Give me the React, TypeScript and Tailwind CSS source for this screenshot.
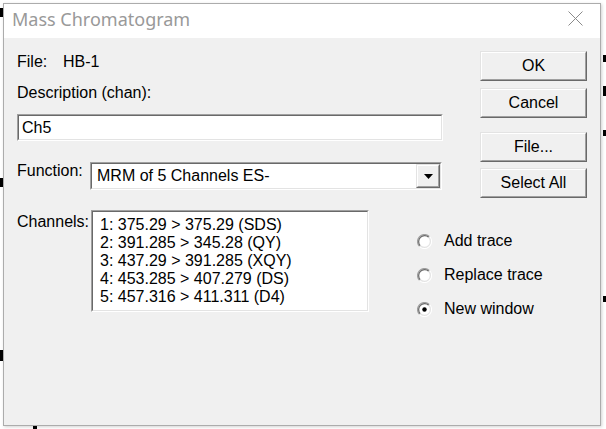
import React from "react";

const font = { fontFamily: '"Liberation Sans", Arial, sans-serif' };

function Sunken({ className = "", children }: { className?: string; children?: React.ReactNode }) {
  return (
    <div className={`shrink-0 border border-t-[#a0a0a0] border-l-[#a0a0a0] border-r-white border-b-white ${className}`}>
      <div className="w-full h-full border border-t-[#696969] border-l-[#696969] border-r-[#e3e3e3] border-b-[#e3e3e3] bg-white">
        {children}
      </div>
    </div>
  );
}

function Raised({ className = "", children }: { className?: string; children?: React.ReactNode }) {
  return (
    <div className={`shrink-0 border border-t-[#e3e3e3] border-l-[#e3e3e3] border-r-[#696969] border-b-[#696969] bg-[#f0f0f0] ${className}`}>
      <div className="w-full h-full border border-t-white border-l-white border-r-[#a0a0a0] border-b-[#a0a0a0] flex items-center justify-center whitespace-nowrap">
        {children}
      </div>
    </div>
  );
}

function Radio({ checked, label }: { checked?: boolean; label: string }) {
  return (
    <div className="flex items-center h-[20px] whitespace-nowrap">
      <svg width="15" height="15" viewBox="0 0 15 15" className="shrink-0">
        <circle cx="7.5" cy="7.5" r="6" fill="white" />
        <path d="M12.45 2.55 A7 7 0 0 0 2.55 12.45" stroke="#a0a0a0" fill="none" strokeWidth="1.2" />
        <path d="M12.45 2.55 A7 7 0 0 1 2.55 12.45" stroke="#ffffff" fill="none" strokeWidth="1.2" />
        <path d="M11.74 3.26 A6 6 0 0 0 3.26 11.74" stroke="#696969" fill="none" strokeWidth="1.2" />
        <path d="M11.74 3.26 A6 6 0 0 1 3.26 11.74" stroke="#e3e3e3" fill="none" strokeWidth="1.2" />
        {checked && <circle cx="7.5" cy="7.5" r="2.2" fill="#000" />}
      </svg>
      <span className="ml-[12px] text-[16px] leading-[18px] text-black">{label}</span>
    </div>
  );
}

export default function App() {
  const channels = [
    "1: 375.29 > 375.29 (SDS)",
    "2: 391.285 > 345.28 (QY)",
    "3: 437.29 > 391.285 (XQY)",
    "4: 453.285 > 407.279 (DS)",
    "5: 457.316 > 411.311 (D4)",
  ];
  return (
    <div className="relative w-[606px] h-[429px] bg-white overflow-hidden" style={font}>
      {/* background fragments */}
      <div className="absolute left-0 top-[8px] w-[3px] h-[9px] bg-black" />
      <div className="absolute left-0 top-[178px] w-[3px] h-[9px] bg-black" />
      <div className="absolute left-0 top-[350px] w-[3px] h-[11px] bg-black" />
      <div className="absolute left-[33px] top-[425px] w-[4px] h-[4px] bg-black" />
      <div className="absolute left-[603px] top-[55px] w-[3px] h-[7px] bg-black" />
      <div className="absolute left-[603px] top-[86px] w-[3px] h-[10px] bg-black" />
      <div className="absolute left-[603px] top-[130px] w-[3px] h-[6px] bg-black" />
      <div className="absolute left-[603px] top-[296px] w-[3px] h-[6px] bg-black" />

      <div className="relative ml-[3px] mt-[3px] w-[598px] h-[423px] border border-[#acacac] bg-[#f0f0f0] flex flex-col shadow-[1px_1px_3px_rgba(0,0,0,0.18)]">
        {/* title bar */}
        <div className="h-[34px] bg-white flex items-start justify-between shrink-0">
          <span
            className="pl-[8px] pt-[3px] text-[18px] leading-[24px] text-[#999999]"
            style={{ fontFamily: '"Noto Sans", "Open Sans", sans-serif' }}
          >
            Mass Chromatogram
          </span>
          <svg width="15" height="15" viewBox="0 0 15 15" className="mt-[7px] mr-[17px]">
            <path d="M0.5 0.5 L14.5 14.5 M14.5 0.5 L0.5 14.5" stroke="#8a8a8a" strokeWidth="1" />
          </svg>
        </div>

        {/* body */}
        <div className="flex-1 flex pl-[13px] pr-[13px] pt-[13px] text-[16px] leading-[18px] text-black whitespace-nowrap">
          {/* left column */}
          <div className="flex-1 min-w-0 flex flex-col pt-[2px]">
            <div className="flex">
              <span className="w-[46px] shrink-0">File:</span>
              <span>HB-1</span>
            </div>
            <div className="mt-[13px]">Description (chan):</div>
            <Sunken className="mt-[12px] w-[426px] h-[27px]">
              <div className="h-full flex items-center pl-[3px]">Ch5</div>
            </Sunken>

            <div className="flex mt-[21px]">
              <span className="w-[73px] shrink-0">Function:</span>
              <Sunken className="w-[352px] h-[28px]">
                <div className="h-full flex">
                  <div className="flex-1 flex items-center pl-[5px]">MRM of 5 Channels ES-</div>
                  <Raised className="w-[24px] h-full">
                    <svg width="9" height="5" viewBox="0 0 9 5">
                      <path d="M0 0 H9 L4.5 5 Z" fill="#000" />
                    </svg>
                  </Raised>
                </div>
              </Sunken>
            </div>

            <div className="flex mt-[20px]">
              <span className="w-[74px] shrink-0 pt-[3px]">Channels:</span>
              <Sunken className="w-[278px] h-[102px]">
                <div className="flex flex-col pl-[7px] pt-[4px] leading-[18px]">
                  {channels.map((c) => (
                    <div key={c}>{c}</div>
                  ))}
                </div>
              </Sunken>
              <div className="shrink-0 flex flex-col ml-[48px] mt-[21px] gap-[14px]">
                <Radio label="Add trace" />
                <Radio label="Replace trace" />
                <Radio label="New window" checked />
              </div>
            </div>
          </div>

          {/* right column */}
          <div className="w-[107px] shrink-0 flex flex-col">
            <Raised className="h-[30px]">OK</Raised>
            <Raised className="h-[30px] mt-[7px]">Cancel</Raised>
            <Raised className="h-[30px] mt-[14px]">File...</Raised>
            <Raised className="h-[30px] mt-[6px]">Select All</Raised>
          </div>
        </div>
      </div>
    </div>
  );
}
